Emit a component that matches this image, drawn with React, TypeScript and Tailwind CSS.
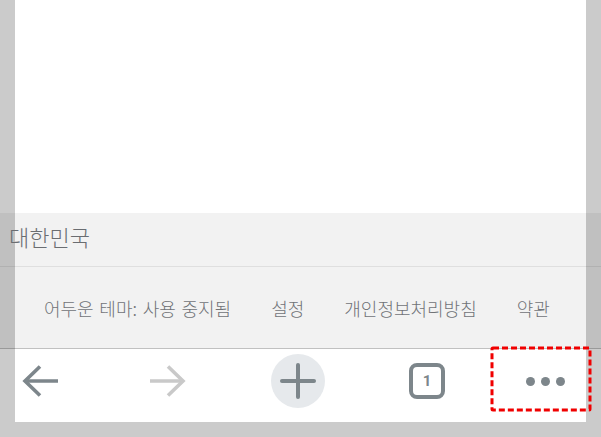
const links = ['어두운 테마: 사용 중지됨', '설정', '개인정보처리방침', '약관'];

function BackIcon({ color }: { color: string }) {
    return (
        <svg width="36" height="36" viewBox="0 0 36 36" fill="none" stroke={color} strokeWidth="3.6" className="ml-[7px]">
            <path d="M36 18H3" />
            <path d="M18 3.5L3 18l15 14.5" />
        </svg>
    );
}

function ForwardIcon({ color }: { color: string }) {
    return (
        <svg width="36" height="36" viewBox="0 0 36 36" fill="none" stroke={color} strokeWidth="3.6" className="ml-[92px]">
            <path d="M0 18h33" />
            <path d="M18 3.5L33 18 18 32.5" />
        </svg>
    );
}

function PlusButton() {
    return (
        <div className="ml-[85px] flex h-[54px] w-[54px] items-center justify-center rounded-full bg-[#e6e9ec]">
            <svg width="36" height="36" viewBox="0 0 36 36" fill="none" stroke="#7d868b" strokeWidth="4" strokeLinecap="round">
                <path d="M2 18h32" />
                <path d="M18 2v32" />
            </svg>
        </div>
    );
}

function TabCount() {
    return (
        <div className="ml-[84px] flex h-[36px] w-[36px] items-center justify-center rounded-[8px] border-4 border-[#7d868b] font-['Roboto',sans-serif] text-[15px] font-bold text-[#7d868b]">
            1
        </div>
    );
}

function MoreDots() {
    return (
        <div className="ml-[80px] flex w-[40px] justify-center gap-[6px]">
            <div className="h-[9px] w-[9px] rounded-full bg-[#7d868b]" />
            <div className="h-[9px] w-[9px] rounded-full bg-[#7d868b]" />
            <div className="h-[9px] w-[9px] rounded-full bg-[#7d868b]" />
        </div>
    );
}

export default function App() {
    return (
        <div className="relative h-[437px] w-[601px] overflow-hidden bg-[#cbcbcb] font-['Noto_Sans_CJK_KR',sans-serif]">
            <div className="mx-[15px] h-[422px] bg-white">
                <div className="h-[213px]" />
                <div className="-mx-[15px] bg-black/[0.05]">
                    <div className="flex h-[54px] items-center border-b border-black/[0.08] pb-[6px] pl-[9px] text-[22px] font-light text-[#6a6d71]">
                        대한민국
                    </div>
                    <div className="flex h-[82px] items-center gap-10 border-b border-black/20 pt-[2px] pl-[44px] text-[18px] font-light text-[#707377] [word-spacing:1.7px]">
                        {links.map((link) => (
                            <span key={link}>{link}</span>
                        ))}
                    </div>
                </div>
                <div className="flex h-[73px] items-center pb-[9px]">
                    <BackIcon color="#7d868b" />
                    <ForwardIcon color="#c9c9c9" />
                    <PlusButton />
                    <TabCount />
                    <MoreDots />
                </div>
            </div>
            <svg width="104" height="68" viewBox="0 0 104 68" fill="none" className="absolute left-[489px] top-[345px]">
                <rect x="3" y="3" width="98" height="62" rx="1" stroke="#f00000" strokeWidth="3" strokeDasharray="6 3" />
            </svg>
        </div>
    );
}
